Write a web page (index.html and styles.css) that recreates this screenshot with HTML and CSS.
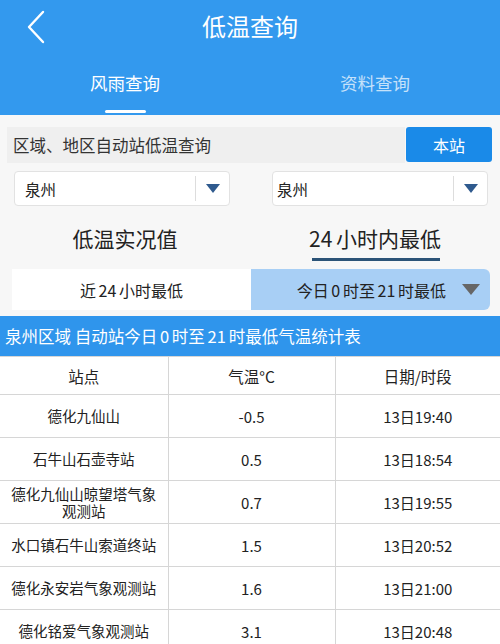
FILE: index.html
```html
<!DOCTYPE html>
<html lang="zh">
<head>
<meta charset="utf-8">
<title>低温查询</title>
<link rel="stylesheet" href="styles.css">
</head>
<body>
<header class="header">
  <div class="topbar">
    <svg class="back" width="20" height="34" viewBox="0 0 20 34"><polyline points="17,2 3,17 17,32" fill="none" stroke="#fff" stroke-width="2.4" stroke-linecap="round" stroke-linejoin="round"/></svg>
    <div class="title">低温查询</div>
  </div>
  <nav class="tabs">
    <div class="tab active">风雨查询</div>
    <div class="tab">资料查询</div>
  </nav>
</header>

<div class="query">
  <div class="query-label">区域、地区自动站低温查询</div>
  <div class="btn">本站</div>
</div>

<div class="selects">
  <div class="select sel-left"><span class="sel-text">泉州</span><span class="sel-arrow"></span></div>
  <div class="select sel-right"><span class="sel-text">泉州</span><span class="sel-arrow"></span></div>
</div>

<div class="modes">
  <div class="mode">低温实况值</div>
  <div class="mode active">24&#8198;小时内最低</div>
</div>

<div class="segment">
  <div class="seg">近&#8198;24&#8198;小时最低</div>
  <div class="seg on"><span>今日&#8198;0&#8198;时至&#8198;21&#8198;时最低</span><span class="seg-arrow"></span></div>
</div>

<div class="band">泉州区域 自动站今日&#8198;0&#8198;时至&#8198;21&#8198;时最低气温统计表</div>

<table class="data">
  <colgroup><col class="c1"><col class="c2"><col class="c3"></colgroup>
  <thead>
    <tr><th>站点</th><th>气温°C</th><th>日期/时段</th></tr>
  </thead>
  <tbody>
    <tr><td>德化九仙山</td><td>-0.5</td><td>13日19:40</td></tr>
    <tr><td>石牛山石壶寺站</td><td>0.5</td><td>13日18:54</td></tr>
    <tr><td class="two">德化九仙山晾望塔气象观测站</td><td>0.7</td><td>13日19:55</td></tr>
    <tr><td>水口镇石牛山索道终站</td><td>1.5</td><td>13日20:52</td></tr>
    <tr><td>德化永安岩气象观测站</td><td>1.6</td><td>13日21:00</td></tr>
    <tr><td>德化铭爱气象观测站</td><td>3.1</td><td>13日20:48</td></tr>
  </tbody>
</table>
</body>
</html>
```

FILE: styles.css
```css
* { box-sizing: border-box; }
html, body { margin: 0; padding: 0; }
body {
  width: 500px;
  height: 644px;
  overflow: hidden;
  background: #f7f7f7;
  font-family: "Noto Sans CJK SC", "Noto Sans", sans-serif;
  color: #333;
}
.header {
  background: #3399ee;
  height: 115px;
  display: flex;
  flex-direction: column;
}
.topbar {
  height: 54px;
  display: flex;
  align-items: center;
  justify-content: center;
  position: relative;
}
.back {
  position: absolute;
  left: 26px;
  top: 10px;
}
.title {
  color: #fff;
  font-size: 24px;
  line-height: 1;
  margin-top: -2px;
}
.tabs {
  flex: 1;
  display: flex;
}
.tab {
  flex: 1;
  display: flex;
  align-items: center;
  justify-content: center;
  font-size: 17.5px;
  color: rgba(255,255,255,0.72);
  position: relative;
  padding-bottom: 4px;
}
.tab.active { color: #fff; }
.tab.active::after {
  content: "";
  position: absolute;
  left: 105px;
  width: 41px;
  bottom: 2px;
  height: 3px;
  border-radius: 2px;
  background: #fff;
}
.query {
  display: flex;
  margin: 12px 8px 0 7px;
  height: 36px;
}
.query-label {
  flex: 1;
  background: #efefef;
  font-size: 16.5px;
  line-height: 36px;
  padding-left: 6px;
  color: #333;
}
.btn {
  width: 86px;
  margin-left: 1px;
  background: #1a8ae8;
  color: #fff;
  border-radius: 3px;
  font-size: 16px;
  display: flex;
  align-items: center;
  justify-content: center;
  height: 35px;
}
.selects {
  display: flex;
  gap: 42px;
  padding-left: 14px;
  margin-top: 8px;
}
.select {
  width: 216px;
  height: 35px;
  background: #fff;
  border: 1px solid #e2e2e2;
  border-radius: 4px;
  display: flex;
  align-items: center;
  position: relative;
}
.sel-text {
  font-size: 15.5px;
  color: #222;
  flex: 1;
}
.sel-left .sel-text { padding-left: 10px; }
.sel-right .sel-text { padding-left: 4px; }
.sel-arrow {
  width: 34px;
  height: 25px;
  border-left: 1px solid #ddd;
  display: flex;
  align-items: center;
  justify-content: center;
}
.sel-arrow::after {
  content: "";
  border-left: 7px solid transparent;
  border-right: 7px solid transparent;
  border-top: 9px solid #2f5a8e;
}
.modes {
  display: flex;
  height: 55px;
}
.mode {
  flex: 1;
  display: flex;
  align-items: center;
  justify-content: center;
  font-size: 21px;
  color: #222;
  position: relative;
  padding-top: 8px;
}
.mode.active::after {
  content: "";
  position: absolute;
  left: 62px;
  width: 128px;
  bottom: 0;
  height: 3px;
  background: #2b5377;
}
.segment {
  display: flex;
  margin: 8px 10px 0 12px;
  height: 41px;
}
.seg {
  flex: 0 0 239px;
  background: #fff;
  display: flex;
  align-items: center;
  justify-content: center;
  font-size: 16px;
  color: #222;
}
.seg.on {
  background: #a8cff5;
  border-radius: 0 6px 6px 0;
  justify-content: flex-end;
  padding-right: 10px;
  gap: 16px;
}
.seg-arrow {
  border-left: 9px solid transparent;
  border-right: 9px solid transparent;
  border-top: 11px solid #666;
}
.band {
  margin-top: 6px;
  height: 40px;
  background: #2f95ec;
  color: #fff;
  font-size: 16.5px;
  line-height: 40px;
  padding-left: 5px;
  white-space: nowrap;
}
.data {
  width: 500px;
  border-collapse: collapse;
  table-layout: fixed;
  background: #fff;
}
.c1 { width: 168px; }
.c2 { width: 167px; }
.c3 { width: 165px; }
.data th, .data td {
  border: 1px solid #d6d6d6;
  text-align: center;
  color: #222;
  font-weight: normal;
  padding: 0 8px;
}
.data tr > :first-child { border-left: none; }
.data tr > :last-child { border-right: none; }
.data thead tr { border-top: none; }
.data th {
  height: 38px;
  font-size: 15.5px;
}
.data td {
  height: 43px;
  font-size: 15px;
}
.data td:first-child {
  font-size: 14.5px;
  line-height: 1.2;
  padding: 0 10px;
}
```
